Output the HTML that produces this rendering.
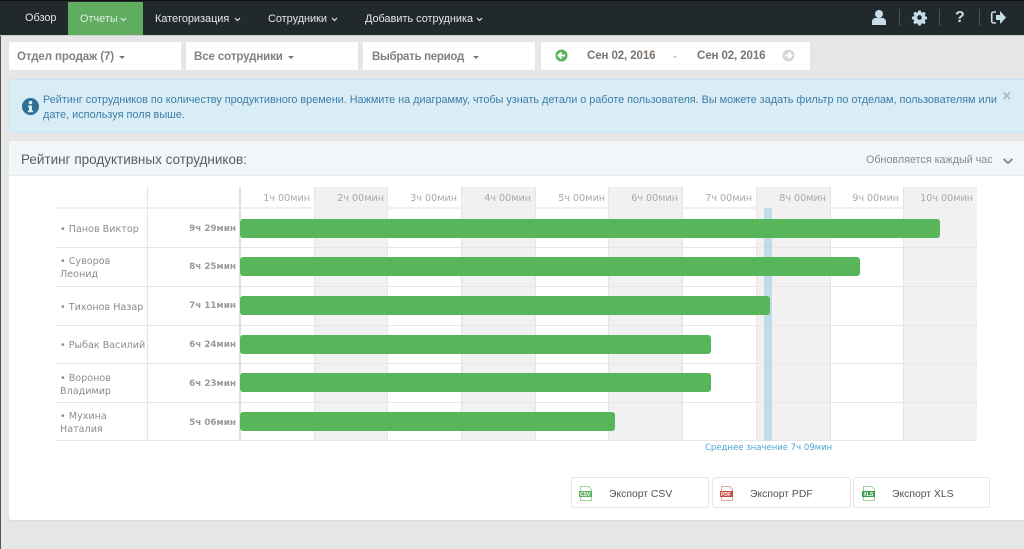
<!DOCTYPE html>
<html lang="ru"><head><meta charset="utf-8"><title>Рейтинг</title>
<style>
html,body{margin:0;padding:0}
body{width:1024px;height:549px;overflow:hidden;position:relative;background:#e6e6e6;font-family:"Liberation Sans",sans-serif}
.a{position:absolute}
.t{position:absolute;white-space:nowrap}
.nav{color:#e4e8ea;font-size:10.9px;top:12px}
.f{background:#fff;top:42px;height:28px}
.ft{font-size:11.5px;font-weight:bold;color:#84807c;top:51px;letter-spacing:-.1px}
.car{position:absolute;width:0;height:0;border-left:3px solid transparent;border-right:3px solid transparent;border-top:3px solid #777}
.ch{position:absolute;top:187px;width:74px;height:254px}
.g{background:#f1f1f1}
.v{position:absolute;top:187px;width:1px;height:254px;background:#e4e4e4}
.h{position:absolute;left:56px;width:921px;height:1px;background:#e6e6e6}
.hl{position:absolute;top:193px;font:9.6px "DejaVu Sans",sans-serif;color:#a8a8a8;white-space:nowrap;text-align:right;width:70px}
.bar{position:absolute;left:240px;height:19px;background:#57b55a;border-radius:3px}
.n{position:absolute;left:60px;width:88px;font:9.6px/13px "DejaVu Sans",sans-serif;color:#8c8c8c}
.d{position:absolute;left:170px;width:66px;text-align:right;font:bold 8.8px "DejaVu Sans",sans-serif;color:#9a9a9a;white-space:nowrap}
.btn{position:absolute;top:477px;height:31px;background:#fff;border:1px solid #e6e6e6;border-radius:3px;box-sizing:border-box}
.bt{position:absolute;top:489px;font-size:10.4px;color:#55514e;white-space:nowrap}
</style></head><body>

<!-- nav -->
<div class="a" style="left:0;top:0;width:1024px;height:35px;background:#22292d;border-top:1px solid #111;box-sizing:border-box"></div>
<div class="a" style="left:0;top:35px;width:1024px;height:1px;background:#cfcfcf"></div>
<div class="a" style="left:0;top:36px;width:1px;height:513px;background:#555"></div>
<div class="a" style="left:68px;top:2px;width:75px;height:33px;background:#60ad60"></div>
<div class="t nav" style="left:25px">Обзор</div>
<div class="t nav" style="left:80px;top:13px">Отчеты</div>
<div class="t nav" style="left:155px;top:13px">Категоризация</div>
<div class="t nav" style="left:268px;top:13px">Сотрудники</div>
<div class="t nav" style="left:365px;top:13px">Добавить сотрудника</div>
<svg class="a" style="left:0;top:0" width="1024" height="36" fill="none" stroke="#dfe6e8" stroke-width="1.2">
<path d="M121 18l2.500 2.500 2.500-2.500M235 18l2.500 2.500 2.500-2.500M332 18l2.500 2.500 2.500-2.500M477 18l2.500 2.500 2.500-2.500"/>
<g stroke="#4a5256" stroke-width="1"><path d="M899.500 9v17M939.500 9v17M979.500 9v17"/></g>
<g stroke="none" fill="#c5dcea">
<circle cx="879" cy="14" r="4"/><path d="M872 25v-3.500c0-2.300 2-3.500 3.500-3.500h7c1.500 0 3.500 1.200 3.500 3.500V25z"/>
<g transform="translate(919.500 17.500) scale(.83) translate(-919 -18.500)"><path fill-rule="evenodd" d="M917.500 10h3l.5 2.200 1.500.6 1.900-1.200 2.100 2.100-1.200 1.900.6 1.500 2.200.5v3l-2.200.5-.6 1.500 1.200 1.900-2.100 2.100-1.900-1.200-1.500.6-.5 2.200h-3l-.5-2.200-1.500-.6-1.900 1.200-2.100-2.100 1.200-1.900-.6-1.500-2.200-.5v-3l2.200-.5.6-1.500-1.200-1.900 2.100-2.100 1.900 1.200 1.500-.6zM919 15.700a2.800 2.800 0 1 0 0 5.600 2.800 2.800 0 0 0 0-5.600z"/></g>
<path d="M996 15h4v-4l6 6.500-6 6.500v-4h-4z"/>
</g>
<path stroke="#c5dcea" stroke-width="1.600" d="M996 12h-2.500a1.800 1.800 0 0 0-1.800 1.800v7.400a1.800 1.800 0 0 0 1.800 1.800h2.500"/>
</svg>
<div class="t" style="left:955px;top:9px;font-size:16px;font-weight:bold;color:#c5dcea">?</div>

<!-- filters -->
<div class="a f" style="left:9px;width:172px"></div>
<div class="a f" style="left:186px;width:172px"></div>
<div class="a f" style="left:363px;width:172px"></div>
<div class="a f" style="left:541px;width:269px"></div>
<div class="t ft" style="left:17px">Отдел продаж (7)</div><div class="car" style="left:119px;top:56px"></div>
<div class="t ft" style="left:194px">Все сотрудники</div><div class="car" style="left:288px;top:56px"></div>
<div class="t ft" style="left:372px;letter-spacing:-.3px">Выбрать период</div><div class="car" style="left:473px;top:56px"></div>
<div class="t ft" style="left:587px;top:50px;color:#7b736c">Сен 02, 2016</div>
<div class="t ft" style="left:673px;top:51px;color:#bbb">-</div>
<div class="t ft" style="left:697px;top:50px;color:#7b736c">Сен 02, 2016</div>
<svg class="a" style="left:555px;top:49px" width="14" height="14"><circle cx="6.500" cy="6.500" r="6" fill="#57b55a"/><path d="M10 6.500H4M6.500 3.500l-3 3 3 3" fill="none" stroke="#fff" stroke-width="2"/></svg>
<svg class="a" style="left:782px;top:49px" width="14" height="14"><circle cx="6.500" cy="6.500" r="6" fill="#d5d5d5"/><path d="M3 6.500h6M6.500 3.500l3 3-3 3" fill="none" stroke="#fff" stroke-width="2"/></svg>

<!-- alert -->
<div class="a" style="left:9px;top:79px;width:1016px;height:54px;background:#d9edf7;border:1px solid #c5e6f2;border-radius:3px;box-sizing:border-box"></div>
<svg class="a" style="left:22px;top:98px" width="18" height="18"><circle cx="8.500" cy="8.500" r="8.500" fill="#2f6f95"/><circle cx="8.500" cy="4.500" r="1.800" fill="#d9edf7"/><path d="M6 7.500h4v5h1.200v1.800H5.800v-1.800H7V9.300H6z" fill="#d9edf7"/></svg>
<div class="t" style="left:43px;top:94px;font-size:10.9px;color:#3d7ea6;letter-spacing:-.035px">Рейтинг сотрудников по количеству продуктивного времени. Нажмите на диаграмму, чтобы узнать детали о работе пользователя. Вы можете задать фильтр по отделам, пользователям или</div>
<div class="t" style="left:43px;top:109px;font-size:10.9px;color:#3d7ea6">дате, используя поля выше.</div>
<div class="t" style="left:1002px;top:88px;font-size:16px;font-weight:bold;color:#a9bcc6">×</div>

<!-- panel -->
<div class="a" style="left:9px;top:141px;width:1016px;height:380px;background:#fff;border-bottom:1px solid #dcdcdc;border-radius:3px;box-sizing:border-box"></div>
<div class="a" style="left:9px;top:141px;width:1016px;height:35px;background:#f1f7f8;border-bottom:1px solid #e4ecee;box-sizing:border-box"></div>
<div class="t" style="left:21px;top:152px;font-size:13.5px;color:#5c5c5c">Рейтинг продуктивных сотрудников:</div>
<div class="t" style="left:866px;top:154px;font-size:10.75px;color:#8a8a8a">Обновляется каждый час</div>
<svg class="a" style="left:1002px;top:157px" width="12" height="9"><path d="M1.500 2l4.500 4 4.500-4" fill="none" stroke="#8a8f91" stroke-width="2"/></svg>

<!-- chart -->
<div class="ch g" style="left:314px"></div>
<div class="ch g" style="left:461px"></div>
<div class="ch g" style="left:608px"></div>
<div class="ch g" style="left:756px"></div>
<div class="ch g" style="left:903px"></div>
<div class="v" style="left:147px"></div>
<div class="a" style="left:239px;top:187px;width:2px;height:254px;background:#e0e0e0"></div>
<div class="v" style="left:314px"></div><div class="v" style="left:387px"></div><div class="v" style="left:461px"></div><div class="v" style="left:535px"></div><div class="v" style="left:608px"></div><div class="v" style="left:682px"></div><div class="v" style="left:756px"></div><div class="v" style="left:830px"></div><div class="v" style="left:903px"></div>
<div class="h" style="top:207px;height:2px;background:#efefef"></div>
<div class="h" style="top:247px"></div><div class="h" style="top:286px"></div><div class="h" style="top:325px"></div><div class="h" style="top:363px"></div><div class="h" style="top:402px"></div><div class="h" style="top:440px"></div>
<div class="a" style="left:764px;top:208px;width:8px;height:233px;background:#c0dcea"></div>

<div class="hl" style="left:240px">1ч 00мин</div>
<div class="hl" style="left:314px">2ч 00мин</div>
<div class="hl" style="left:387px">3ч 00мин</div>
<div class="hl" style="left:461px">4ч 00мин</div>
<div class="hl" style="left:535px">5ч 00мин</div>
<div class="hl" style="left:608px">6ч 00мин</div>
<div class="hl" style="left:682px">7ч 00мин</div>
<div class="hl" style="left:756px">8ч 00мин</div>
<div class="hl" style="left:829px">9ч 00мин</div>
<div class="hl" style="left:903px">10ч 00мин</div>

<div class="bar" style="top:219px;width:700px"></div>
<div class="bar" style="top:257px;width:620px"></div>
<div class="bar" style="top:296px;width:530px"></div>
<div class="bar" style="top:335px;width:471px"></div>
<div class="bar" style="top:373px;width:471px"></div>
<div class="bar" style="top:412px;width:375px"></div>

<div class="n" style="top:223px">• Панов Виктор</div>
<div class="n" style="top:255px">• Суворов<br>Леонид</div>
<div class="n" style="top:301px;white-space:nowrap">• Тихонов Назар</div>
<div class="n" style="top:339px;white-space:nowrap">• Рыбак Василий</div>
<div class="n" style="top:372px">• Воронов<br>Владимир</div>
<div class="n" style="top:410px">• Мухина<br>Наталия</div>

<div class="d" style="top:224px">9ч 29мин</div>
<div class="d" style="top:262px">8ч 25мин</div>
<div class="d" style="top:301px">7ч 11мин</div>
<div class="d" style="top:340px">6ч 24мин</div>
<div class="d" style="top:379px">6ч 23мин</div>
<div class="d" style="top:418px">5ч 06мин</div>

<div class="t" style="left:705px;top:443px;font:8.5px 'DejaVu Sans',sans-serif;color:#4ea5d3">Среднее значение 7ч 09мин</div>

<!-- export -->
<div class="btn" style="left:571px;width:138px"></div>
<div class="btn" style="left:712px;width:139px"></div>
<div class="btn" style="left:853px;width:137px"></div>
<svg class="a" style="left:579px;top:486px" width="14" height="15"><path d="M1.500 .5h8l3 3v11h-11z" fill="#fff" stroke="#9fd09f"/><rect x="0" y="5" width="13" height="6" fill="#5fb35f"/><text x="1" y="10" font-size="5" font-family="Liberation Sans" font-weight="bold" fill="#fff">CSV</text></svg>
<svg class="a" style="left:720px;top:486px" width="14" height="15"><path d="M1.500 .5h8l3 3v11h-11z" fill="#fff" stroke="#e2a9a3"/><rect x="0" y="5" width="13" height="6" fill="#c9483e"/><text x="1" y="10" font-size="5" font-family="Liberation Sans" font-weight="bold" fill="#fff">PDF</text></svg>
<svg class="a" style="left:862px;top:486px" width="14" height="15"><path d="M1.500 .5h8l3 3v11h-11z" fill="#fff" stroke="#9fd09f"/><rect x="0" y="5" width="13" height="6" fill="#3f9f4a"/><text x="1.500" y="10" font-size="5" font-family="Liberation Sans" font-weight="bold" fill="#fff">XLS</text></svg>
<div class="bt" style="left:609px">Экспорт CSV</div>
<div class="bt" style="left:750px">Экспорт PDF</div>
<div class="bt" style="left:892px">Экспорт XLS</div>
</body></html>
